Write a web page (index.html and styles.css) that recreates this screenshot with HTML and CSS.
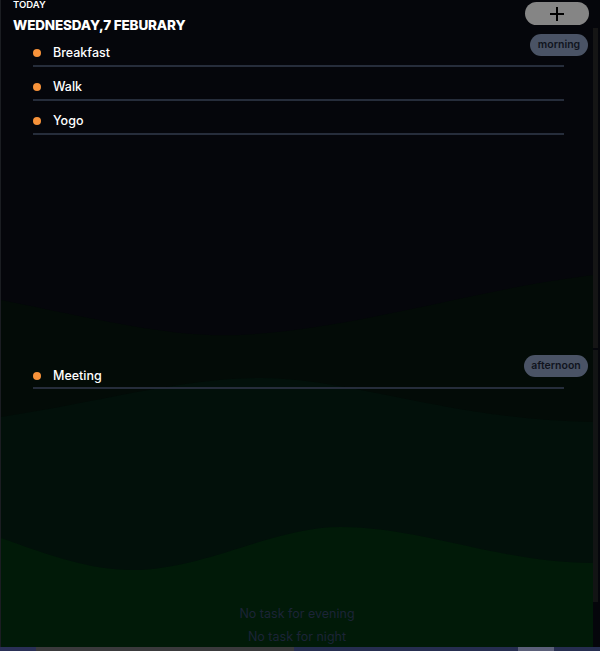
FILE: index.html
```html
<!DOCTYPE html>
<html>
<head>
<meta charset="utf-8">
<link rel="stylesheet" href="styles.css">
</head>
<body>
<div class="screen">
  <div class="app">
    <svg class="waves" viewBox="0 0 592 647" preserveAspectRatio="none">
      <path fill="#030b07" d="M0 300 C 100 320, 170 338, 240 335 C 360 328, 470 290, 592 275 L592 647 L0 647 Z"/>
      <path fill="#02100a" d="M0 417 C 100 402, 180 378, 260 378 C 350 378, 450 420, 592 422 L592 647 L0 647 Z"/>
      <path fill="#011a08" d="M0 538 C 50 556, 90 570, 130 570 C 205 570, 270 527, 340 527 C 420 527, 500 563, 592 563 L592 647 L0 647 Z"/>
    </svg>
    <div class="content">
      <header class="head">
        <div class="titles">
          <div class="today">TODAY</div>
          <div class="date">WEDNESDAY,7 FEBURARY</div>
        </div>
        <button class="add" aria-label="add">
          <svg width="16" height="16" viewBox="0 0 16 16"><path d="M8 1v14M1 8h14" stroke="#000" stroke-width="2" fill="none"/></svg>
        </button>
      </header>
      <section class="part morning">
        <span class="pill pill-morning">morning</span>
        <ul class="tasks">
          <li class="task"><span class="dot"></span>Breakfast</li>
          <li class="task"><span class="dot"></span>Walk</li>
          <li class="task"><span class="dot"></span>Yogo</li>
        </ul>
      </section>
      <section class="part afternoon">
        <span class="pill pill-afternoon">afternoon</span>
        <ul class="tasks">
          <li class="task"><span class="dot"></span>Meeting</li>
        </ul>
      </section>
      <div class="empties">
        <div class="empty">No task for evening</div>
        <div class="empty">No task for night</div>
      </div>
    </div>
  </div>
  <div class="scroll"><div class="thumb"></div><div class="track"></div></div>
</div>
<div class="strip">
  <span class="s1"></span><span class="s2"></span><span class="s3"></span><span class="s4"></span><span class="s5"></span>
</div>
</body>
</html>
```
FILE: styles.css
```css
* { box-sizing: border-box; }
html, body { margin: 0; padding: 0; background: #05060b; }
body {
  width: 600px;
  height: 651px;
  overflow: hidden;
  font-family: "Inter", "Noto Sans", sans-serif;
  color: #fff;
}
.screen {
  display: flex;
  height: 647px;
}
.app {
  position: relative;
  width: 593px;
  height: 647px;
  border-left: 1px solid #1b1d22;
  overflow: hidden;
}
.waves {
  position: absolute;
  left: 0; top: 0;
  width: 592px;
  height: 647px;
}
.content {
  position: relative;
  display: flex;
  flex-direction: column;
  height: 647px;
}
.head {
  display: flex;
  justify-content: space-between;
  align-items: flex-start;
  padding: 0 4px 0 12px;
  height: 33px;
}
.today {
  font-size: 9.5px;
  font-weight: 600;
  line-height: 9px;
}
.date {
  margin-top: 8px;
  font-size: 13.5px;
  font-weight: 800;
  line-height: 16px;
  letter-spacing: -0.15px;
}
.add {
  margin-top: 2px;
  width: 64px;
  height: 23px;
  border: 0;
  border-radius: 12px;
  background: #858585;
  display: flex;
  align-items: center;
  justify-content: center;
  padding: 0;
}
.add svg { display: block; }
.part {
  position: relative;
  padding-left: 32px;
}
.morning { height: 322px; }
.afternoon { flex: 1; }
.pill {
  position: absolute;
  top: 1px;
  right: 5px;
  height: 22px;
  border-radius: 11px;
  background: #4a5365;
  color: #10141d;
  font-size: 10.5px;
  font-weight: 600;
  line-height: 22px;
  text-align: center;
}
.pill-morning { width: 58px; }
.pill-afternoon { width: 64px; top: 0; }
.tasks {
  list-style: none;
  margin: 0;
  padding: 0;
  width: 531px;
}
.task {
  display: flex;
  align-items: center;
  padding: 11px 0 3px 0;
  line-height: 18px;
  height: 34px;
  font-size: 12.5px;
  font-weight: 500;
  color: #fff;
  border-bottom: 2px solid #262d3b;
}
.afternoon .task { padding: 12px 0 2px 0; }
.dot {
  width: 8px;
  height: 8px;
  border-radius: 50%;
  background: #f7923a;
  margin: 0 12px 0 0;
}
.empties { margin-bottom: -1px; }
.empty {
  text-align: center;
  font-size: 12.5px;
  line-height: 23px;
  color: #1c2437;
}
.scroll {
  width: 5px;
  padding-top: 28px;
  display: flex;
  flex-direction: column;
  margin-right: 2px;
}
.thumb { height: 320px; background: #151515; }
.track { height: 252px; margin-top: 2px; background: #121414; }
.strip {
  display: flex;
  height: 4px;
}
.strip span { display: block; height: 4px; }
.s1 { width: 36px; background: #2a3056; }
.s2 { width: 258px; background: #3a3a3c; }
.s3 { width: 224px; background: #262e50; }
.s4 { width: 36px; background: #5b6079; }
.s5 { flex: 1; background: #262e50; }
```
